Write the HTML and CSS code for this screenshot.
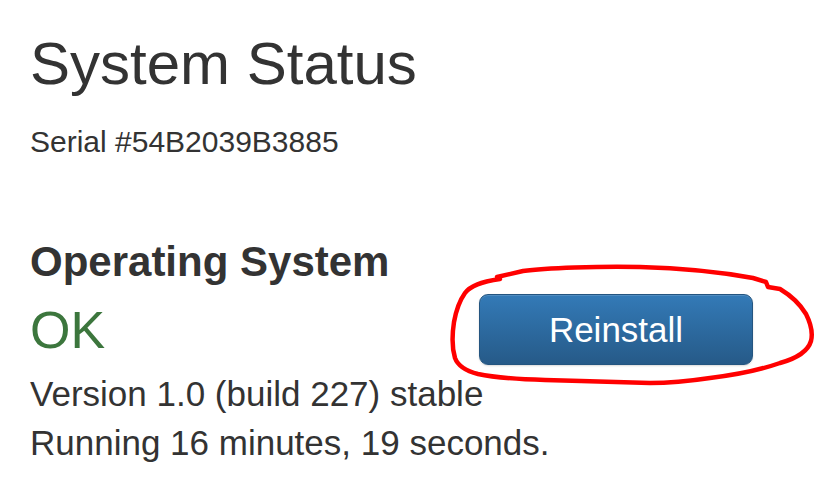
FILE: index.html
```html
<!DOCTYPE html>
<html lang="en">
<head>
    <meta charset="UTF-8">
    <title>System Status</title>
    <link rel="stylesheet" href="styles.css">
</head>
<body>

    <div class="container">
        <h1>System Status</h1>
        <p class="serial">Serial #54B2039B3885</p>

        <div class="status-row">
            <div class="status-info">
                <h3>Operating System</h3>
                <div class="status-ok">OK</div>
                <p class="info-line">Version 1.0 (build 227) stable</p>
                <p class="info-line">Running 16 minutes, 19 seconds.</p>
            </div>
            <div class="status-action">
                <button class="btn-primary">Reinstall</button>
            </div>
        </div>
    </div>

    <!-- hand-drawn annotation on top of the page -->
    <svg class="scribble" width="818" height="494" viewBox="0 0 818 494">
        <path d="M497 277 L523 271 C545 268 600 266 640 267 C680 268 720 272 753 278 L766 282 L768 287 L780 289 C790 295 800 304 806 314 C811 324 813 333 811 341 C808 351 798 358 780 363 C760 370 735 375 710 378 C690 381 670 383 650 383 C620 382 580 381 545 380 C512 379 492 377 478 374 C466 371 458 366 455 358 C452 348 452 335 454 322 C456 311 460 300 465 293 C470 286 480 282 500 279" />
    </svg>

</body>
</html>
```

FILE: styles.css
```css
body {
    margin: 0;
    font-family: "Liberation Sans", Arial, sans-serif;
    color: #333333;
    background: #ffffff;
}
.container {
    padding: 0 30px;
}
h1 {
    font-size: 60px;
    font-weight: normal;
    line-height: 1.1;
    margin: 31px 0 0;
}
.serial {
    font-size: 30px;
    line-height: 37px;
    margin: 26px 0 0;
}
.status-row {
    display: flex;
    margin-top: 79px;
}
.status-info {
    width: 449px;
    flex-shrink: 0;
    white-space: nowrap;
}
h3 {
    font-size: 42px;
    font-weight: bold;
    line-height: 1.1;
    margin: 0;
}
.status-ok {
    color: #3c763d;
    font-size: 52px;
    line-height: 1.1;
    margin-top: 17px;
}
.info-line {
    font-size: 35px;
    line-height: 49px;
    margin: 0;
}
.info-line:first-of-type {
    margin-top: 10px;
}
.status-action {
    flex-shrink: 0;
    padding-top: 55px;
}
.btn-primary {
    width: 274px;
    height: 71px;
    font-family: "Liberation Sans", Arial, sans-serif;
    font-size: 35px;
    color: #ffffff;
    background: linear-gradient(to bottom, #337ab7 0, #265a88 100%);
    border: 1px solid #245580;
    border-radius: 9px;
    box-shadow: inset 0 1px 0 rgba(255, 255, 255, 0.15), 0 1px 2px rgba(0, 0, 0, 0.15);
    cursor: pointer;
}
.scribble {
    position: absolute;
    top: 0;
    left: 0;
    pointer-events: none;
}
.scribble path {
    fill: none;
    stroke: #ff0000;
    stroke-width: 4.5;
    stroke-linecap: round;
    stroke-linejoin: round;
}
```
